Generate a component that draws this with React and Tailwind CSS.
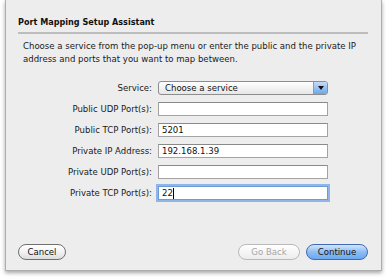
import React from 'react';

const font = { fontFamily: '"DejaVu Sans Condensed", "DejaVu Sans", Verdana, sans-serif' };

const Field = ({ label, value, focused }) => (
  <>
    <label className="text-right text-[9.5px] leading-[14px] text-[#1a1a1a] pr-[6px]">{label}</label>
    <div
      className={`h-[14px] bg-white border text-[9.5px] leading-[12px] pl-[3px] text-[#111] ${
        focused
          ? 'border-[#6e9bd6] ring-2 ring-[#8fb6e8]'
          : 'border-[#a3a3a3] border-t-[#8a8a8a]'
      }`}
    >
      {value}
      {focused && <span className="inline-block w-px h-[11px] bg-black align-middle" />}
    </div>
  </>
);

const Pill = ({ children, variant, width }) => {
  const styles = {
    normal: 'border-[#6f6f6f] bg-gradient-to-b from-white via-[#f2f2f2] to-[#dcdcdc] text-[#111]',
    disabled: 'border-[#b9b9b9] bg-gradient-to-b from-white to-[#ececec] text-[#a6a6a6]',
    primary: 'border-[#3f6bb3] bg-gradient-to-b from-[#d2e6fb] via-[#8dbdf3] to-[#6aa8ee] text-[#111]',
  };
  return (
    <button
      className={`h-[16px] rounded-full border text-[9.5px] leading-[14px] ${width} ${styles[variant]}`}
    >
      {children}
    </button>
  );
};

export default function App() {
  return (
    <div className="w-[386px] h-[280px] bg-white" style={font}>
      <div className="ml-[5px] w-[377px] h-[271px] bg-[#ededed] border border-t-0 border-[#adadad] shadow-[0_2px_4px_rgba(0,0,0,0.35)] flex flex-col">
        <div className="pl-[12px] pr-[13px] pt-[15px]">
          <h1 className="text-[9px] font-bold leading-[14px] text-[#111]">Port Mapping Setup Assistant</h1>
          <div className="mt-[3px] h-[2px] bg-[#bdbdbd]" />
          <p className="mt-[5px] pl-[5px] text-[9.5px] leading-[13px] text-[#1a1a1a]">
            Choose a service from the pop-up menu or enter the public and the private IP address and ports that you want to map between.
          </p>
        </div>

        <div className="mt-[16px] grid grid-cols-[152px_170px] gap-y-[7px] items-center">
          <label className="text-right text-[9.5px] leading-[14px] text-[#1a1a1a] pr-[6px]">Service:</label>
          <div className="h-[14px] flex rounded-[3px] border border-[#8d8d8d] overflow-hidden bg-gradient-to-b from-white to-[#e6e6e6]">
            <span className="flex-1 text-[9.5px] leading-[12px] pl-[6px] text-[#111]">Choose a service</span>
            <span className="w-[14px] flex items-center justify-center bg-gradient-to-b from-[#c4dcf8] to-[#6ea6ea] border-l border-[#7d9fd0]">
              <svg width="6" height="4" viewBox="0 0 6 4"><path d="M0 0h6L3 4z" fill="#111" /></svg>
            </span>
          </div>
          <Field label="Public UDP Port(s):" value="" />
          <Field label="Public TCP Port(s):" value="5201" />
          <Field label="Private IP Address:" value="192.168.1.39" />
          <Field label="Private UDP Port(s):" value="" />
          <Field label="Private TCP Port(s):" value="22" focused />
        </div>

        <div className="mt-auto mb-[10px] pl-[12px] pr-[13px] flex items-center">
          <Pill variant="normal" width="w-[48px]">Cancel</Pill>
          <div className="flex-1" />
          <Pill variant="disabled" width="w-[62px]">Go Back</Pill>
          <div className="w-[6px]" />
          <Pill variant="primary" width="w-[62px]">Continue</Pill>
        </div>
      </div>
    </div>
  );
}
